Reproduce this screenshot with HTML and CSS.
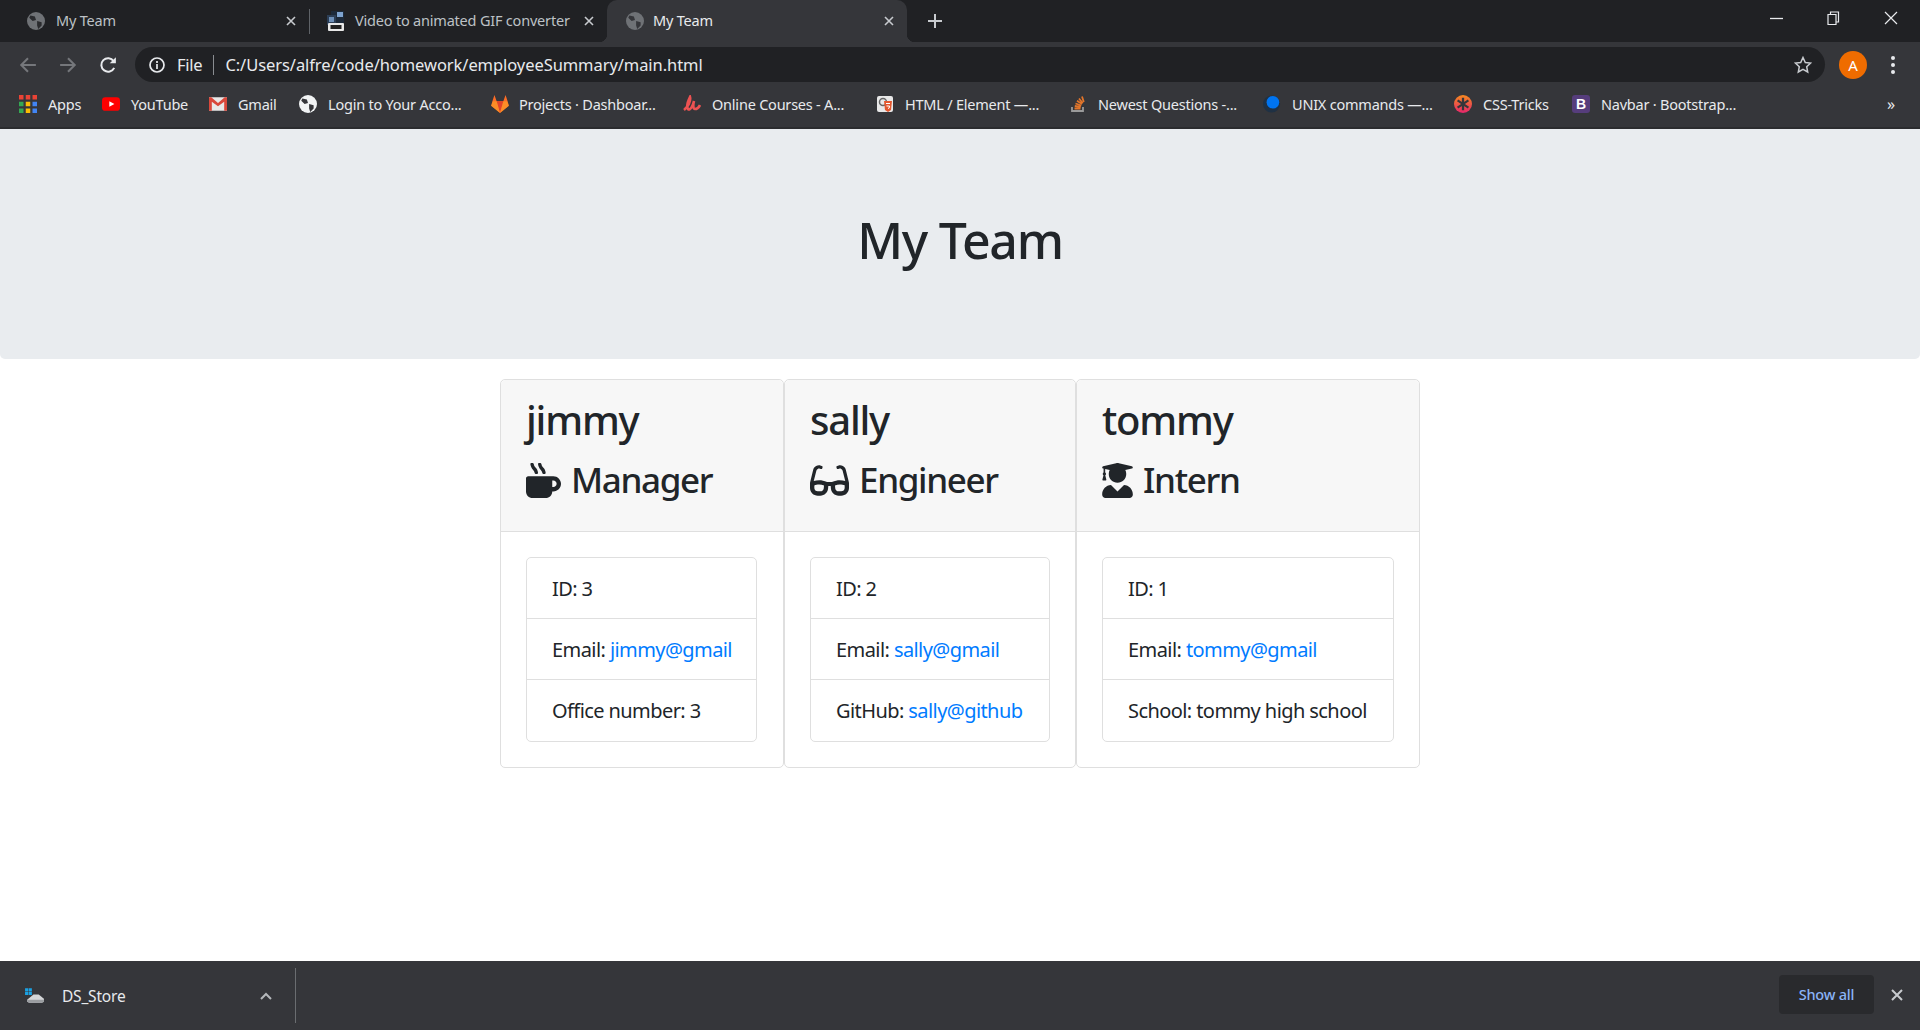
FILE: index.html
```html
<!DOCTYPE html>
<html lang="en">
<head>
    <meta charset="UTF-8">
    <meta name="viewport" content="width=device-width, initial-scale=1.0">
    <title>My Team</title>
    <link rel="stylesheet" href="styles.css">
</head>
<body>

<!-- Browser tabs -->
<div class="tab-strip">
    <div class="tab tab-first">
        <svg class="tab-icon" viewBox="0 0 16 16"><circle cx="8" cy="8" r="8" fill="#6f7276"/><path d="M3 3l4 1 1 3-3 1-3-3zM9 8l4 1 0 3-3 3-1-3z" fill="#2a2b2e"/></svg>
        <span class="tab-title">My Team</span>
        <svg class="tab-close" viewBox="0 0 10 10"><path d="M1 1l8 8M9 1l-8 8"/></svg>
    </div>
    <div class="tab-divider"></div>
    <div class="tab tab-second">
        <svg class="tab-icon" viewBox="0 0 20 20"><rect x="5" y="0" width="13" height="12" fill="#1d2a3a"/><rect x="11" y="1" width="6" height="5" fill="#7ea3cf"/><rect x="1" y="4" width="9" height="10" fill="#2c3e55"/><rect x="3" y="6" width="5" height="5" fill="#6d8fb8"/><rect x="2" y="12" width="16" height="8" rx="1" fill="#e8e8e8"/><rect x="4.500" y="14" width="11" height="4" fill="#222"/></svg>
        <span class="tab-title">Video to animated GIF converter</span>
        <svg class="tab-close" viewBox="0 0 10 10"><path d="M1 1l8 8M9 1l-8 8"/></svg>
    </div>
    <div class="tab tab-active">
        <svg class="tab-icon" viewBox="0 0 16 16"><circle cx="8" cy="8" r="8" fill="#6f7276"/><path d="M3 3l4 1 1 3-3 1-3-3zM9 8l4 1 0 3-3 3-1-3z" fill="#35363a"/></svg>
        <span class="tab-title">My Team</span>
        <svg class="tab-close" viewBox="0 0 10 10"><path d="M1 1l8 8M9 1l-8 8"/></svg>
    </div>
    <svg class="new-tab" viewBox="0 0 14 14"><path d="M7 0v14M0 7h14"/></svg>
    <div class="window-controls">
        <svg class="win-min" viewBox="0 0 12 12"><path d="M0 6h12"/></svg>
        <svg class="win-restore" viewBox="0 0 14 14"><path d="M2 3.500h8v10H2zM4.500 3.500V1h8v10H10"/></svg>
        <svg class="win-close" viewBox="0 0 14 14"><path d="M1 1l12 12M13 1L1 13"/></svg>
    </div>
</div>

<!-- Address bar -->
<div class="toolbar">
    <svg class="nav-icon nav-off" viewBox="0 0 16 16"><path d="M15 8H2M8 2L2 8l6 6"/></svg>
    <svg class="nav-icon nav-off" viewBox="0 0 16 16"><path d="M1 8h13M8 2l6 6-6 6"/></svg>
    <svg class="nav-icon" viewBox="0 0 16 16"><path d="M13.500 10.500A6 6 0 1 1 13 4.500"/><path class="solid" d="M15 1v5.500H9.500z"/></svg>
    <div class="omnibox">
        <svg class="info-icon" viewBox="0 0 16 16"><circle cx="8" cy="8" r="7"/><path d="M8 7v5M8 4v2"/></svg>
        <span class="scheme">File</span>
        <span class="omni-divider"></span>
        <span class="url">C:/Users/alfre/code/homework/employeeSummary/main.html</span>
        <svg class="star-icon" viewBox="0 0 18 18"><path d="M9 1.500l2.300 5 5.300.6-3.900 3.600 1 5.300L9 13.400 4.300 16l1-5.300L1.400 7.100l5.300-.6z"/></svg>
    </div>
    <div class="avatar">A</div>
    <div class="menu-dots"><span></span><span></span><span></span></div>
</div>

<!-- Bookmarks -->
<div class="bookmarks">
    <div class="bookmark">
        <svg class="bm-icon" viewBox="0 0 16 16">
            <rect width="4" height="4" fill="#ea4335"/><rect x="6" width="4" height="4" fill="#ea4335"/><rect x="12" width="4" height="4" fill="#ea4335"/>
            <rect y="6" width="4" height="4" fill="#34a853"/><rect x="6" y="6" width="4" height="4" fill="#fbbc04"/><rect x="12" y="6" width="4" height="4" fill="#4285f4"/>
            <rect y="12" width="4" height="4" fill="#34a853"/><rect x="6" y="12" width="4" height="4" fill="#fbbc04"/><rect x="12" y="12" width="4" height="4" fill="#4285f4"/>
        </svg>
        <span>Apps</span>
    </div>
    <div class="bookmark">
        <svg class="bm-icon" viewBox="0 0 16 16"><rect y="2" width="16" height="12" rx="3" fill="#f00"/><path d="M6.500 5.500v5L11 8z" fill="#fff"/></svg>
        <span>YouTube</span>
    </div>
    <div class="bookmark">
        <svg class="bm-icon" viewBox="0 0 16 16"><rect y="2" width="16" height="12" fill="#e8e8e8"/><path d="M0 2h2l6 5 6-5h2v12h-2.500V6L8 10 2.500 6v8H0z" fill="#d9483b"/></svg>
        <span>Gmail</span>
    </div>
    <div class="bookmark">
        <svg class="bm-icon" viewBox="0 0 16 16"><circle cx="8" cy="8" r="8" fill="#f1f3f4"/><path d="M3 3l4 1 1 3-3 1-3-3zM9 8l4 1 0 3-3 3-1-3z" fill="#35363a"/></svg>
        <span>Login to Your Acco...</span>
    </div>
    <div class="bookmark bookmark-wide">
        <svg class="bm-icon" viewBox="0 0 18 18"><path d="M9 17L1 10.500l1.500-5L4 1l2 5.500h6L14 1l1.500 4.500 1.500 5z" fill="#fc6d26"/><path d="M9 17L6 6.500h6z" fill="#e24329"/><path d="M9 17L1 10.500l1.500-4h3.500zM9 17l8-6.500-1.500-4H12z" fill="#fca326" opacity=".6"/></svg>
        <span>Projects · Dashboar...</span>
    </div>
    <div class="bookmark">
        <svg class="bm-icon bm-stroke" viewBox="0 0 18 18"><path d="M1 15C5 12 8 6 7 2 5 6 3 11 5 14c2 2 5-3 6-8-1 4-1 8 1 8 2 0 4-2 5-4" stroke="#ec5252"/></svg>
        <span>Online Courses - A...</span>
    </div>
    <div class="bookmark">
        <svg class="bm-icon" viewBox="0 0 18 18"><rect x="1" y="1" width="16" height="16" rx="2" fill="#e8e8e8"/><circle cx="7" cy="7" r="3.500" fill="none" stroke="#666" stroke-width="1.500"/><path d="M8 6h8l-1 9-3 2-3-2z" fill="#e4572e"/><path d="M10 8.500h4M10.500 11h3l-.3 2-1.200.5" stroke="#fff" fill="none"/></svg>
        <span>HTML / Element —...</span>
    </div>
    <div class="bookmark">
        <svg class="bm-icon bm-thin" viewBox="0 0 18 18"><path d="M3 12v4h11v-4" stroke="#9a9a9a"/><path d="M5.500 13.500h6M5.800 11l6 .8M6.500 8.500l5.800 2M8 5.800l5 3.300M10 3.500l3.800 4.700M13 1.500l1.800 5.500" stroke="#e2752a"/></svg>
        <span>Newest Questions -...</span>
    </div>
    <div class="bookmark">
        <svg class="bm-icon" viewBox="0 0 20 20"><circle cx="9.500" cy="10" r="9.500" fill="#1f3144"/><circle cx="11" cy="8" r="7" fill="#0074f0"/></svg>
        <span>UNIX commands —...</span>
    </div>
    <div class="bookmark">
        <svg class="bm-icon" viewBox="0 0 20 20"><defs><linearGradient id="tricks" x1="0" y1="0" x2="0" y2="1"><stop offset="0" stop-color="#f68a1f"/><stop offset="1" stop-color="#e5266b"/></linearGradient></defs><circle cx="10" cy="10" r="10" fill="url(#tricks)"/><path d="M10 3v14M4 6l12 8M16 6L4 14" stroke="#35363a" stroke-width="2.500"/></svg>
        <span>CSS-Tricks</span>
    </div>
    <div class="bookmark">
        <svg class="bm-icon" viewBox="0 0 18 18"><rect width="18" height="18" rx="3" fill="#563d7c"/><text x="9" y="14" text-anchor="middle" class="bm-b">B</text></svg>
        <span>Navbar · Bootstrap...</span>
    </div>
    <div class="more-bookmarks">»</div>
</div>

<!-- Page -->
<div class="page">
    <header class="jumbotron">
        <h1>My Team</h1>
    </header>

    <div class="team">
        <section class="card">
            <div class="card-header">
                <h2>jimmy</h2>
                <h3>
                    <svg class="role-icon icon-mug" viewBox="0 0 512 512"><path d="M127.100 146.500c1.300 7.700 8 13.500 16 13.500h16.500c9.800 0 17.600-8.500 16.300-18-3.800-28.200-16.400-54.200-36.600-74.700-14.400-14.700-23.600-33.300-26.400-53.500C111.800 5.900 105 0 96.800 0H80.400C70.600 0 63 8.500 64.100 18c3.900 31.900 18 61.300 40.600 84.400 12 12.200 19.700 27.500 22.400 44.100zm112 0c1.300 7.700 8 13.500 16 13.500h16.500c9.800 0 17.600-8.500 16.300-18-3.800-28.200-16.400-54.200-36.600-74.700-14.400-14.700-23.600-33.300-26.400-53.500C223.800 5.900 217 0 208.800 0h-16.400c-9.800 0-17.500 8.500-16.300 18 3.900 31.900 18 61.300 40.600 84.400 12 12.200 19.700 27.500 22.400 44.100zM400 192H32c-17.700 0-32 14.300-32 32v192c0 53 43 96 96 96h192c53 0 96-43 96-96h16c61.800 0 112-50.200 112-112s-50.200-112-112-112zm0 160h-16v-96h16c26.500 0 48 21.500 48 48s-21.500 48-48 48z"/></svg>
                    Manager
                </h3>
            </div>
            <div class="card-body">
                <ul class="list-group">
                    <li>ID: 3</li>
                    <li>Email: <a href="#">jimmy@gmail</a></li>
                    <li>Office number: 3</li>
                </ul>
            </div>
        </section>

        <section class="card">
            <div class="card-header">
                <h2>sally</h2>
                <h3>
                    <svg class="role-icon icon-glasses" viewBox="0 0 576 512"><path d="M574.100 280.370L528.750 98.660c-5.910-23.700-21.590-44.050-43-55.810-21.440-11.730-46.970-14.110-70.190-6.330l-15.250 5.080c-8.390 2.790-12.920 11.860-10.120 20.240l5.060 15.180c2.790 8.380 11.850 12.910 20.230 10.120l13.180-4.390c10.870-3.620 23-3.570 33.160 1.730 10.290 5.370 17.570 14.560 20.370 25.820l38.460 153.820c-22.190-6.810-49.790-12.460-81.200-12.460-34.770 0-73.980 7.020-114.850 26.740h-73.180c-40.870-19.740-80.080-26.750-114.860-26.750-31.420 0-59.020 5.650-81.210 12.460l38.460-153.830c2.790-11.250 10.090-20.450 20.380-25.810 10.160-5.300 22.280-5.350 33.150-1.730l13.170 4.390c8.380 2.790 17.440-1.740 20.230-10.120l5.060-15.180c2.800-8.380-1.730-17.450-10.120-20.240l-15.250-5.080c-23.220-7.780-48.750-5.410-70.190 6.330-21.410 11.770-37.090 32.110-43 55.800L1.900 280.370A64.218 64.218 0 0 0 0 295.860v70.250C0 429.010 51.580 480 115.200 480h37.120c60.280 0 110.370-45.940 114.880-105.370l2.930-38.630h35.750l2.930 38.630C313.310 434.060 363.400 480 423.680 480h37.120c63.620 0 115.200-50.990 115.200-113.880v-70.250c0-5.230-.64-10.430-1.900-15.500zm-370.720 89.420c-1.970 25.910-24.400 46.210-51.060 46.210H115.200C86.970 416 64 393.620 64 366.110v-37.540c18.120-6.490 43.420-12.570 72.970-12.570 23.860 0 47.260 4.330 69.930 12.920l-3.520 41.780zM512 366.120c0 27.510-22.970 49.880-51.200 49.880h-37.120c-26.670 0-49.100-20.300-51.060-46.210l-3.520-41.780c22.670-8.590 46.080-12.920 69.950-12.920 29.370 0 54.790 6.120 72.950 12.590v37.440z"/></svg>
                    Engineer
                </h3>
            </div>
            <div class="card-body">
                <ul class="list-group">
                    <li>ID: 2</li>
                    <li>Email: <a href="#">sally@gmail</a></li>
                    <li>GitHub: <a href="#">sally@github</a></li>
                </ul>
            </div>
        </section>

        <section class="card">
            <div class="card-header">
                <h2>tommy</h2>
                <h3>
                    <svg class="role-icon icon-grad" viewBox="0 0 448 512"><path d="M319.400 320.600L224 416l-95.400-95.400C57.100 323.700 0 382.200 0 454.400v9.600c0 26.500 21.500 48 48 48h352c26.500 0 48-21.500 48-48v-9.600c0-72.200-57.100-130.700-128.600-133.800zM13.600 79.800l6.400 1.500v58.400c-7 4.200-12 11.500-12 20.300 0 8.400 4.600 15.400 11.100 19.700L3.500 242c-1.700 6.900 2.100 14 7.600 14h41.800c5.500 0 9.300-7.100 7.600-14l-15.600-62.300C51.400 175.400 56 168.400 56 160c0-8.800-5-16.100-12-20.300V87.100l66 15.900c-8.600 17.200-14 36.400-14 57 0 70.700 57.300 128 128 128s128-57.300 128-128c0-20.600-5.300-39.800-14-57l96.300-23.200c18.200-4.400 18.200-27.100 0-31.500l-190.400-46c-13-3.100-26.700-3.100-39.700 0L13.600 48.200c-18.100 4.400-18.100 27.200 0 31.600z"/></svg>
                    Intern
                </h3>
            </div>
            <div class="card-body">
                <ul class="list-group">
                    <li>ID: 1</li>
                    <li>Email: <a href="#">tommy@gmail</a></li>
                    <li>School: tommy high school</li>
                </ul>
            </div>
        </section>
    </div>
</div>

<!-- Download shelf -->
<div class="shelf">
    <div class="download">
        <svg class="file-icon" viewBox="0 0 20 16"><path d="M1 1h3v3H1zM4.500 1h3v3h-3zM1 4.500h3v3H1zM4.500 4.500h3v3h-3z" fill="#1ba1e2"/><path d="M3 12l6-5h5l5 4v3l-2 1H5l-2-1z" fill="#d4d6d8"/><path d="M3 12h16v2l-2 1H5l-2-1z" fill="#9a9da0"/></svg>
        <span class="file-name">DS_Store</span>
        <svg class="chevron" viewBox="0 0 12 8"><path d="M1 7l5-5 5 5"/></svg>
    </div>
    <div class="shelf-divider"></div>
    <div class="show-all">Show all</div>
    <svg class="shelf-close" viewBox="0 0 12 12"><path d="M1 1l10 10M11 1L1 11"/></svg>
</div>

</body>
</html>
```

FILE: styles.css
```css
* {
    box-sizing: border-box;
}

html, body {
    height: 100%;
}

body {
    margin: 0;
    display: flex;
    flex-direction: column;
    height: 1030px;
    overflow: hidden;
    font-family: "Noto Sans", "Open Sans", sans-serif;
    color: #212529;
    background-color: #fff;
}

svg {
    display: block;
    flex: none;
}

/* Tabs */
.tab-strip {
    display: flex;
    align-items: center;
    height: 42px;
    background-color: #202124;
    color: #bdc1c6;
    font-size: 14.5px;
    letter-spacing: -0.2px;
}

.tab {
    display: flex;
    align-items: center;
    height: 42px;
}

.tab-first {
    width: 309px;
    padding: 0 13px 0 27px;
}

.tab-second {
    width: 297px;
    padding: 0 13px 0 16px;
}

.tab-active {
    position: relative;
    width: 300px;
    padding: 0 13px 0 19px;
    background-color: #35363a;
    color: #e8eaed;
    border-radius: 10px 10px 0 0;
}

/* the little flares at the foot of the active tab */
.tab-active::before,
.tab-active::after {
    content: "";
    position: absolute;
    bottom: 0;
    width: 8px;
    height: 8px;
}

.tab-active::before {
    left: -8px;
    background: radial-gradient(circle at 0 0, transparent 8px, #35363a 8.5px);
}

.tab-active::after {
    right: -8px;
    background: radial-gradient(circle at 100% 0, transparent 8px, #35363a 8.5px);
}

.tab-divider {
    width: 1px;
    height: 25px;
    background-color: #5f6368;
}

.tab-icon {
    width: 18px;
    height: 18px;
    margin-right: 11px;
}

.tab-second .tab-icon {
    width: 20px;
    height: 20px;
    margin-right: 9px;
}

.tab-active .tab-icon {
    margin-right: 9px;
}

.tab-title {
    flex: 1;
    margin-top: -2px;
    white-space: nowrap;
}

.tab-close {
    width: 10px;
    height: 10px;
    fill: none;
    stroke: #c8cbcf;
    stroke-width: 1.6;
}

.new-tab {
    width: 14px;
    height: 14px;
    margin-left: 21px;
    fill: none;
    stroke: #c8cbcf;
    stroke-width: 2;
}

.window-controls {
    display: flex;
    align-items: center;
    margin-left: auto;
    margin-top: -6px;
    padding-right: 22px;
    fill: none;
    stroke: #e8eaed;
    stroke-width: 1.2;
}

.win-min {
    width: 13px;
    height: 13px;
}

.win-restore {
    width: 14px;
    height: 14px;
    margin-left: 43px;
}

.win-close {
    width: 14px;
    height: 14px;
    margin-left: 44px;
}

/* Address bar */
.toolbar {
    display: flex;
    align-items: center;
    height: 44px;
    padding: 1px 0 0 19px;
    background-color: #35363a;
}

.nav-icon {
    width: 18px;
    height: 18px;
    margin-right: 22px;
    fill: none;
    stroke: #e8eaed;
    stroke-width: 1.8;
}

.nav-icon .solid {
    fill: #e8eaed;
    stroke: none;
}

.nav-off {
    stroke: #75777b;
}

.omnibox {
    display: flex;
    align-items: center;
    width: 1690px;
    height: 35px;
    margin-left: -4px;
    padding: 0 13px 0 14px;
    border-radius: 18px;
    background-color: #202124;
    color: #e8eaed;
    font-size: 16.5px;
    letter-spacing: -0.25px;
}

.info-icon {
    width: 16px;
    height: 16px;
    fill: none;
    stroke: #e8eaed;
    stroke-width: 1.7;
}

.scheme {
    margin-left: 12px;
}

.omni-divider {
    width: 1px;
    height: 20px;
    margin: 0 11px;
    background-color: #8a8d91;
}

.url {
    flex: 1;
    letter-spacing: -0.07px;
}

.star-icon {
    width: 18px;
    height: 18px;
    fill: none;
    stroke: #c8cbcf;
    stroke-width: 1.5;
}

.avatar {
    display: flex;
    align-items: center;
    justify-content: center;
    width: 28px;
    height: 28px;
    margin-left: 14px;
    border-radius: 50%;
    background-color: #ef6c00;
    color: #fff;
    font-size: 15px;
}

.menu-dots {
    display: flex;
    flex-direction: column;
    gap: 3px;
    margin-left: 24px;
}

.menu-dots span {
    width: 4px;
    height: 4px;
    border-radius: 50%;
    background-color: #e8eaed;
}

/* Bookmarks */
.bookmarks {
    display: grid;
    grid-template-columns: 83px 107px 90px 191px 193px 193px 193px 194px 191px 118px 315px 1fr;
    align-items: center;
    height: 43px;
    padding: 0 0 5px 19px;
    background-color: #35363a;
    border-bottom: 2px solid #2b2c2f;
    color: #e8eaed;
    font-size: 14.5px;
    letter-spacing: -0.22px;
    white-space: nowrap;
}

.bookmark {
    display: flex;
    align-items: center;
    gap: 11px;
}

.bookmark-wide {
    gap: 9px;
}

.bm-icon {
    width: 18px;
    height: 18px;
}

.bookmark-wide .bm-icon {
    width: 20px;
    height: 20px;
}

.bm-stroke {
    fill: none;
    stroke-width: 2.6;
}

.bm-thin {
    fill: none;
    stroke-width: 1.8;
}

.bm-b {
    fill: #fff;
    font-size: 14px;
    font-weight: 700;
    font-family: "Liberation Sans", sans-serif;
    letter-spacing: 0;
}

.more-bookmarks {
    font-size: 16px;
}

/* Page */
.page {
    flex: 1;
}

.jumbotron {
    display: flex;
    align-items: center;
    justify-content: center;
    height: 230px;
    padding-bottom: 8px;
    background-color: #e9ecef;
    border-radius: 0 0 5px 5px;
}

h1 {
    margin: 0;
    font-size: 50px;
    font-weight: 500;
    letter-spacing: -1.3px;
}

.team {
    display: grid;
    grid-template-columns: 284px 292px 344px;
    justify-content: center;
    margin-top: 20px;
}

.card {
    border: 1px solid #dfdfdf;
    border-radius: 5px;
}

.card-header {
    height: 152px;
    padding: 16px 25px 0;
    background-color: #f7f7f7;
    border-bottom: 1px solid #dfdfdf;
    border-radius: 5px 5px 0 0;
}

h2 {
    margin: 0 0 12px;
    font-size: 40px;
    font-weight: 500;
    line-height: 48px;
    letter-spacing: -1.2px;
}

h3 {
    display: flex;
    align-items: center;
    gap: 10px;
    margin: 0;
    font-size: 35px;
    font-weight: 500;
    line-height: 48px;
    letter-spacing: -1.35px;
}

.role-icon {
    fill: #212529;
    height: 35px;
}

.icon-mug {
    width: 35px;
}

.icon-glasses {
    width: 39px;
}

.icon-grad {
    width: 31px;
}

.card-body {
    padding: 25px;
}

/* first column is a pixel narrower inside */
.card:first-child .card-body {
    padding-right: 26px;
}

.list-group {
    margin: 0;
    padding: 0;
    list-style: none;
    border: 1px solid #dfdfdf;
    border-radius: 5px;
}

.list-group li {
    height: 61px;
    padding: 16px 25px 0;
    font-size: 20px;
    line-height: 30px;
    letter-spacing: -0.58px;
    white-space: nowrap;
}

.list-group li:first-child {
    height: 60px;
}

.list-group li:last-child {
    height: 62px;
}

.list-group li + li {
    border-top: 1px solid #dfdfdf;
}

a {
    color: #007bff;
    text-decoration: none;
}

/* Download shelf */
.shelf {
    display: flex;
    align-items: center;
    height: 69px;
    background-color: #35363a;
    color: #e8eaed;
}

.download {
    display: flex;
    align-items: center;
    width: 295px;
    padding: 0 23px 0 24px;
}

.file-icon {
    width: 21px;
    height: 17px;
}

.file-name {
    flex: 1;
    margin-left: 17px;
    font-size: 15.5px;
    letter-spacing: -0.2px;
}

.chevron {
    width: 12px;
    height: 8px;
    fill: none;
    stroke: #b5b8bb;
    stroke-width: 2;
}

.shelf-divider {
    width: 1px;
    height: 55px;
    background-color: #6a6d70;
}

.show-all {
    display: flex;
    align-items: center;
    justify-content: center;
    width: 95px;
    height: 39px;
    margin-left: auto;
    margin-top: -2px;
    padding-bottom: 2px;
    border-radius: 4px;
    background-color: #292a2d;
    color: #8ab4f8;
    font-size: 14.5px;
    font-weight: 500;
    letter-spacing: -0.2px;
}

.shelf-close {
    width: 12px;
    height: 12px;
    margin: -2px 17px 0 17px;
    fill: none;
    stroke: #c8cbcf;
    stroke-width: 2;
}
```
